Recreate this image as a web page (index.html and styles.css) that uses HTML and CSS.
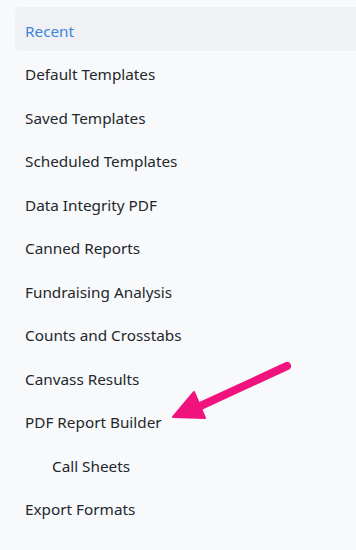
FILE: index.html
```html
<!DOCTYPE html>
<html>
<head>
<meta charset="utf-8">
<link rel="stylesheet" href="styles.css">
</head>
<body>
<nav class="menu">
  <a class="item active">Recent</a>
  <a class="item">Default Templates</a>
  <a class="item">Saved Templates</a>
  <a class="item">Scheduled Templates</a>
  <a class="item">Data Integrity PDF</a>
  <a class="item">Canned Reports</a>
  <a class="item">Fundraising Analysis</a>
  <a class="item">Counts and Crosstabs</a>
  <a class="item">Canvass Results</a>
  <a class="item">PDF Report Builder</a>
  <a class="item sub">Call Sheets</a>
  <a class="item">Export Formats</a>
</nav>
<svg class="arrow" width="356" height="550" viewBox="0 0 356 550">
  <line x1="287" y1="366" x2="196" y2="408" stroke="#f0137e" stroke-width="8" stroke-linecap="round"/>
  <polygon points="173,417 194,392 205,418" fill="#f0137e" stroke="#f0137e" stroke-width="2" stroke-linejoin="round"/>
</svg>
</body>
</html>
```
FILE: styles.css
```css
html, body {
  margin: 0;
  padding: 0;
  background: #f8f9fb;
}
body {
  width: 356px;
  height: 550px;
  overflow: hidden;
  position: relative;
  font-family: "Noto Sans", "Open Sans", sans-serif;
}
.menu {
  display: flex;
  flex-direction: column;
  padding-top: 7px;
  margin-left: 15px;
}
.item {
  display: flex;
  align-items: center;
  box-sizing: border-box;
  height: 43.5px;
  padding-left: 10px;
  padding-top: 4px;
  font-size: 15.3px;
  font-weight: 450;
  color: #23272c;
}
.item.active {
  background: #f0f1f4;
  color: #3a86d8;
  border-radius: 5px 0 0 5px;
}
.item.sub {
  padding-left: 37px;
}
.arrow {
  position: absolute;
  left: 0;
  top: 0;
  pointer-events: none;
}
```
